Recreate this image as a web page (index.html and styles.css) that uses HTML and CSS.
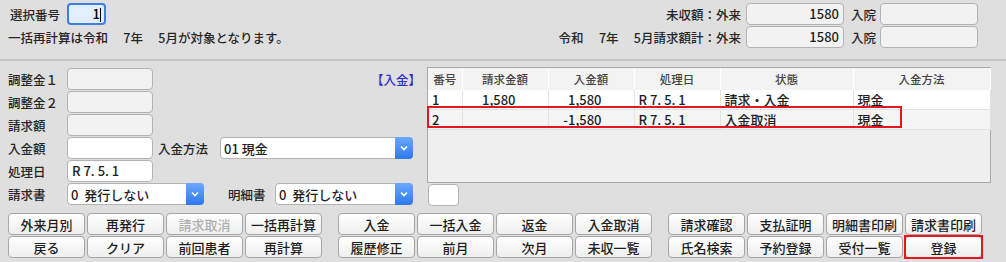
FILE: index.html
```html
<!DOCTYPE html>
<html lang="ja">
<head>
  <meta charset="UTF-8" />
  <title>入金</title>
  <link rel="stylesheet" href="styles.css">
</head>
<body>

  <!-- header: selection and totals -->
  <div class="head">
    <div class="head-left">
      <div class="line">
        <span class="sel-label">選択番号</span>
        <div class="sel-input">1<span class="caret"></span></div>
      </div>
      <div class="line">一括再計算は令和　 7年　 5月が対象となります。</div>
    </div>
    <div class="head-right">
      <span class="hl">未収額：外来</span>
      <div class="box num">1580</div>
      <span class="hl2">入院</span>
      <div class="box"></div>
      <span class="hl">令和　 7年　 5月請求額計：外来</span>
      <div class="box num">1580</div>
      <span class="hl2">入院</span>
      <div class="box"></div>
    </div>
  </div>

  <div class="sep"></div>

  <div class="main">
    <div class="form">
      <div class="row"><span class="lbl">調整金１</span><div class="box fld"></div><span class="tag">【入金】</span></div>
      <div class="row"><span class="lbl">調整金２</span><div class="box fld"></div></div>
      <div class="row"><span class="lbl">請求額</span><div class="box fld"></div></div>
      <div class="row">
        <span class="lbl">入金額</span><div class="box fld white"></div>
        <span class="lbl2">入金方法</span>
        <div class="select w193"><span>01 現金</span><span class="arrow"><svg width="8" height="6" viewBox="0 0 8 6"><path d="M1 1.5l3 3 3-3" stroke="#fff" stroke-width="1.6" fill="none"/></svg></span></div>
      </div>
      <div class="row"><span class="lbl">処理日</span><div class="box fld white txt">R 7. 5. 1</div></div>
      <div class="row">
        <span class="lbl">請求書</span>
        <div class="select w137"><span>0&nbsp;&nbsp;発行しない</span><span class="arrow"><svg width="8" height="6" viewBox="0 0 8 6"><path d="M1 1.5l3 3 3-3" stroke="#fff" stroke-width="1.6" fill="none"/></svg></span></div>
        <span class="lbl3">明細書</span>
        <div class="select w138"><span>0&nbsp;&nbsp;発行しない</span><span class="arrow"><svg width="8" height="6" viewBox="0 0 8 6"><path d="M1 1.5l3 3 3-3" stroke="#fff" stroke-width="1.6" fill="none"/></svg></span></div>
      </div>
    </div>

    <div class="right">
      <div class="grid">
        <table>
          <colgroup>
            <col style="width:34px"><col style="width:86px"><col style="width:86px">
            <col style="width:86px"><col style="width:133px"><col style="width:137px">
          </colgroup>
          <tr><th>番号</th><th>請求金額</th><th>入金額</th><th>処理日</th><th>状態</th><th>入金方法</th></tr>
          <tr class="r1"><td>1</td><td class="n">1,580</td><td class="n">1,580</td><td>R 7. 5. 1</td><td>請求・入金</td><td>現金</td></tr>
          <tr class="r2"><td>2</td><td class="n"></td><td class="n">-1,580</td><td>R 7. 5. 1</td><td>入金取消</td><td>現金</td></tr>
        </table>
        <div class="mark"></div>
      </div>
      <div class="small"></div>
    </div>
  </div>

  <div class="buttons">
    <div class="group">
      <button class="btn">外来月別</button>
      <button class="btn">再発行</button>
      <button class="btn off">請求取消</button>
      <button class="btn">一括再計算</button>
      <button class="btn">戻る</button>
      <button class="btn">クリア</button>
      <button class="btn">前回患者</button>
      <button class="btn">再計算</button>
    </div>
    <div class="group">
      <button class="btn">入金</button>
      <button class="btn">一括入金</button>
      <button class="btn">返金</button>
      <button class="btn">入金取消</button>
      <button class="btn">履歴修正</button>
      <button class="btn">前月</button>
      <button class="btn">次月</button>
      <button class="btn">未収一覧</button>
    </div>
    <div class="group">
      <button class="btn">請求確認</button>
      <button class="btn">支払証明</button>
      <button class="btn">明細書印刷</button>
      <button class="btn">請求書印刷</button>
      <button class="btn">氏名検索</button>
      <button class="btn">予約登録</button>
      <button class="btn">受付一覧</button>
      <button class="btn hot">登録</button>
    </div>
  </div>

</body>
</html>
```

FILE: styles.css
```css
body {
  margin: 0;
  background: #dfdfdf;
  font-family: "Noto Sans CJK JP", "Noto Sans", sans-serif;
  font-size: 12.5px;
  font-weight: 500;
  color: #262626;
  width: 1006px;
  height: 262px;
  overflow: hidden;
}
.head {
  display: flex;
  justify-content: space-between;
  padding: 3px 28px 0 8px;
}
.line {
  display: flex;
  align-items: center;
  height: 22px;
}
.line + .line {
  margin-top: 1px;
}
.sel-label {
  width: 57px;
  margin-left: 2px;
}
.sel-input {
  box-sizing: border-box;
  width: 39px;
  height: 22px;
  border: 2px solid #3d7fe6;
  border-radius: 4px;
  background: #e3eeff;
  text-align: right;
  padding-right: 3px;
  line-height: 18px;
  font-size: 13px;
  color: #000;
}
.caret {
  display: inline-block;
  width: 1px;
  height: 14px;
  background: #000;
  vertical-align: middle;
}
.head-right {
  display: grid;
  grid-template-columns: auto 98px auto 98px;
  grid-template-rows: 22px 22px;
  row-gap: 1px;
  align-items: center;
}
.hl {
  text-align: right;
  margin-right: 5px;
}
.hl2 {
  margin: 0 4px 0 7px;
}
.box {
  box-sizing: border-box;
  height: 22px;
  border: 1px solid #b3b3b3;
  border-radius: 4px;
  background: #f2f2f2;
}
.num {
  text-align: right;
  padding-right: 4px;
  line-height: 20px;
  font-size: 13px;
  color: #1e1e1e;
}
.sep {
  height: 2px;
  background: #c6c6c6;
  margin-top: 11px;
}

.main {
  display: flex;
  gap: 6px;
  padding-left: 8px;
  margin-top: 6px;
}
.form {
  width: 413px;
  padding-top: 1px;
}
.row {
  display: flex;
  align-items: center;
  height: 22px;
  margin-bottom: 1px;
}
.lbl {
  width: 59px;
}
.lbl2 {
  width: 62px;
  margin-left: 5px;
}
.lbl3 {
  width: 47px;
  margin-left: 24px;
}
.fld {
  width: 86px;
}
.white {
  background: #fff;
}
.txt {
  font-size: 13px;
  color: #1e1e1e;
  line-height: 20px;
  padding-left: 4px;
}
.tag {
  margin-left: auto;
  color: #2f2fcc;
}
.select {
  box-sizing: border-box;
  height: 22px;
  border: 1px solid #b3b3b3;
  border-radius: 4px;
  background: #fff;
  display: flex;
  align-items: center;
  justify-content: space-between;
  font-size: 13px;
  color: #1e1e1e;
  padding-left: 3px;
}
.w193 { width: 193px; }
.w137 { width: 137px; }
.w138 { width: 138px; }
.arrow {
  width: 18px;
  height: 22px;
  margin-right: -1px;
  border-radius: 0 4px 4px 0;
  background: linear-gradient(#6aa8ff, #2f77ee);
  display: flex;
  align-items: center;
  justify-content: center;
}

.right {
  width: 564px;
}
.grid {
  position: relative;
  box-sizing: border-box;
  height: 116px;
  border: 1px solid #a9a9a9;
  background: #efefef;
}
table {
  border-collapse: collapse;
  table-layout: fixed;
  width: 562px;
}
th {
  height: 22px;
  padding: 0;
  font-weight: 500;
  font-size: 11.5px;
  color: #444;
  background: #f3f3f3;
  border-right: 1px solid #fff;
}
td {
  height: 17px;
  padding: 0 0 0 4px;
  font-size: 13px;
  color: #1e1e1e;
  border-right: 1px solid #e2e2e2;
  border-bottom: 1px solid #e2e2e2;
  white-space: nowrap;
}
.r1 td { background: #fff; }
.r2 td { background: #f5f5f5; }
td.n {
  text-align: right;
  padding-right: 32px;
}
.mark {
  position: absolute;
  left: -1px;
  top: 38px;
  width: 475px;
  height: 22px;
  box-sizing: border-box;
  border: 2px solid #e5161e;
}
.small {
  box-sizing: border-box;
  width: 31px;
  height: 22px;
  margin: 1px 0 0 1px;
  border: 1px solid #b3b3b3;
  border-radius: 4px;
  background: #fff;
}

.buttons {
  display: flex;
  gap: 16px;
  padding-left: 8px;
  margin-top: 7px;
}
.group {
  display: grid;
  grid-template-columns: repeat(4, 77px);
  grid-auto-rows: 22px;
  gap: 1px 2px;
}
.btn {
  box-sizing: border-box;
  padding: 0;
  border: 1px solid #a6a6a6;
  border-radius: 4px;
  background: linear-gradient(#fefefe, #efefef);
  font-family: inherit;
  font-size: 13px;
  font-weight: 500;
  color: #1e1e1e;
}
.btn.off {
  color: #b0b0b0;
}
.btn.hot {
  position: relative;
}
.btn.hot::after {
  content: "";
  position: absolute;
  top: -2px;
  left: -2px;
  right: -2px;
  bottom: -2px;
  border: 2px solid #e5161e;
}
```
